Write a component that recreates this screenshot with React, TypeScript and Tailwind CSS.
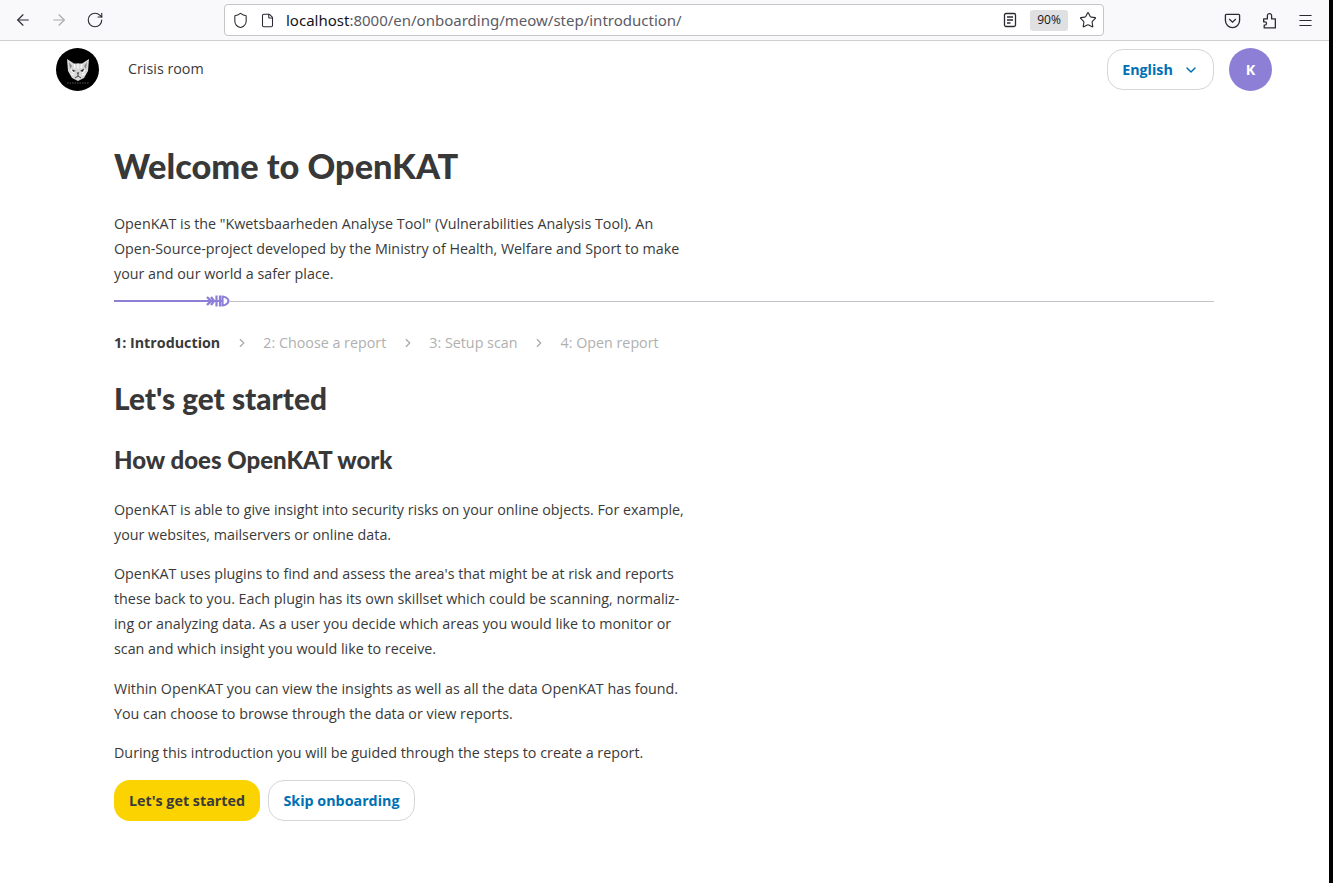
import { ArrowLeft, ArrowRight, ChevronDown, ChevronRight, File, Menu, RotateCw, Shield, Star } from 'lucide-react'

const steps = ['1: Introduction', '2: Choose a report', '3: Setup scan', '4: Open report']

function CatLogo() {
  return (
    <div className="flex h-[43px] w-[43px] items-center justify-center rounded-full bg-black">
      <svg viewBox="0 0 32 32" className="h-[32px] w-[32px]">
        <path d="M5 5l7 4.5h8L27 5l-1 12-4 7-6 3-6-3-4-7z" fill="#d8d8d8" />
        <path d="M7 8l3 4-2 3zM25 8l-3 4 2 3z" fill="#8a8a8a" />
        <path d="M12 10l1 4M16 9.500v5M20 10l-1 4M9 16l3 3M23 16l-3 3M9 20l3 1M23 20l-3 1" stroke="#fff" strokeWidth="1.1" fill="none" />
        <path d="M10 15.500l4 1.500-3 .8zM22 14.500l-4 2.500 3 .8z" fill="#222" />
        <path d="M16 19v3M13 24l3-2 3 2" stroke="#444" strokeWidth="1" fill="none" />
        <path d="M14.500 18.500h3l-1.500 1.500z" fill="#333" />
        <path d="M5 29h22" stroke="#555" strokeWidth="1" strokeDasharray="1.500 1" />
      </svg>
    </div>
  )
}

function FishBone() {
  return (
    <svg viewBox="0 0 24 14" className="h-[14px] w-[24px] shrink-0 text-[#8e7fd6]" fill="none" stroke="currentColor" strokeWidth="2">
      <path d="M0 7h17" />
      <path d="M1 3l4 4-4 4" strokeWidth="2.400" />
      <path d="M5 3l3 4-3 4" strokeWidth="2.400" />
      <path d="M10.500 1.500v11M14 1.500v11" strokeWidth="2.200" />
      <path d="M16.500 2.500c3 0 6 2.500 6 4.500s-3 4.500-6 4.500z" strokeWidth="2.200" />
    </svg>
  )
}

function ReaderIcon() {
  return (
    <svg viewBox="0 0 16 16" className="ml-auto h-[16px] w-[16px]" fill="none" stroke="currentColor" strokeWidth="1.300">
      <rect x="2.500" y="1.500" width="11" height="13" rx="1.500" />
      <path d="M5 5h6M5 8h6M5 11h3.500" />
    </svg>
  )
}

function PocketIcon() {
  return (
    <svg viewBox="0 0 18 18" className="h-[17px] w-[17px]" fill="none" stroke="currentColor" strokeWidth="1.400">
      <path d="M2.500 2.500h13a1 1 0 0 1 1 1V9a7.500 7.500 0 0 1-15 0V3.500a1 1 0 0 1 1-1z" />
      <path d="M5.500 7.500L9 10.800l3.500-3.300" />
    </svg>
  )
}

function ExtensionIcon() {
  return (
    <svg viewBox="0 0 16 16" className="-mr-px h-[17px] w-[17px]" fill="none" stroke="currentColor" strokeWidth="1.200">
      <path d="M3 15h10.500V6.500h-3.500V3.500a2 2 0 0 0-4 0v3H2.500v2.800h1.200a1.500 1.500 0 0 1 0 3H3z" strokeLinejoin="round" />
    </svg>
  )
}

export default function App() {
  return (
    <div className="flex h-[883px] w-[1333px] overflow-hidden bg-black font-['Open_Sans',sans-serif] text-[#3a3a3a]">
      <div className="h-full w-[1329px] bg-white">
        {/* Browser toolbar */}
        <div className="flex h-[41px] items-center border-b border-[#cfcfcf] bg-[#f9f9fb] text-[#2b2a33]">
          <div className="flex items-center gap-[18px] pl-[14px]">
            <ArrowLeft size={18} strokeWidth={1.5} />
            <ArrowRight size={18} strokeWidth={1.5} className="text-[#a9a9ad]" />
            <RotateCw size={18} strokeWidth={1.5} />
          </div>
          <div className="ml-[120px] flex h-[32px] w-[880px] items-center rounded-[4px] border border-[#c6c6c8] bg-white pl-[7px] pr-[6px]">
            <Shield size={17} strokeWidth={1.5} />
            <File size={15} strokeWidth={1.7} className="ml-[11px]" />
            <span className="ml-[11px] font-['Noto_Sans',sans-serif] text-[15px] text-[#5b5b66]">
              <span className="text-[#15141a]">localhost</span>:8000/en/onboarding/meow/step/introduction/
            </span>
            <ReaderIcon />
            <span className="ml-[12px] flex h-[21px] w-[38px] items-center justify-center rounded-[3px] bg-[#e0e0e2] text-[12px] text-[#15141a]">90%</span>
            <Star size={18} strokeWidth={1.5} className="ml-[11px]" />
          </div>
          <div className="ml-auto flex items-center gap-[20px] pr-[15px]">
            <PocketIcon />
            <ExtensionIcon />
            <Menu size={17} strokeWidth={1.5} />
          </div>
        </div>

        {/* Site header */}
        <header className="flex items-center pl-[56px] pr-[57px] pt-[7px]">
          <CatLogo />
          <a className="mb-[2px] ml-[29px] text-[14.3px] text-[#3a3a3a]">Crisis room</a>
          <button className="ml-auto flex h-[41px] w-[107px] items-center justify-center gap-[10px] rounded-[16px] border border-[#d6d6d6] text-[14.3px] font-bold text-[#0070b5]">
            English
            <ChevronDown size={16} strokeWidth={2.2} />
          </button>
          <div className="ml-[15px] flex h-[43px] w-[43px] items-center justify-center rounded-full bg-[#8e7fd6] text-[14.3px] font-bold text-white">K</div>
        </header>

        <main className="pl-[114px]">
          <h1 className="mt-[50px] font-['Lato',sans-serif] text-[34.3px] font-black leading-[50px] text-[#383838]">Welcome to OpenKAT</h1>
          <p className="mt-[20px] w-[576px] text-[14.3px] leading-[25px]">
            OpenKAT is the "Kwetsbaarheden Analyse Tool" (Vulnerabilities Analysis Tool). An Open-Source-project developed by the Ministry of Health, Welfare and Sport to make your and our world a safer place.
          </p>

          {/* Progress line */}
          <div className="mt-[8px] flex w-[1100px] items-center">
            <div className="h-[2px] w-[92px] bg-[#8e7fd6]" />
            <FishBone />
            <div className="h-px flex-1 bg-[#c4c2c8]" />
          </div>

          <ol className="mt-[25px] flex items-center text-[14.3px] leading-[20px]">
            {steps.map((step, i) => (
              <li key={step} className="flex items-center">
                {i > 0 && <ChevronRight size={14} className="mx-[14.5px] text-[#a8a8a8]" />}
                <span className={i === 0 ? 'font-bold text-[#3a3a3a]' : 'text-[#b0b0b0]'}>{step}</span>
              </li>
            ))}
          </ol>

          <h2 className="mt-[26px] font-['Lato',sans-serif] text-[29.8px] font-black leading-[40px] text-[#383838]">Let's get started</h2>
          <h3 className="mt-[23px] font-['Lato',sans-serif] text-[24px] font-black leading-[36px] text-[#383838]">How does OpenKAT work</h3>

          <div className="mt-[19px] w-[576px] space-y-[14.4px] text-[14.3px] leading-[25px]">
            <p>OpenKAT is able to give insight into security risks on your online objects. For example, your websites, mailservers or online data.</p>
            <p>
              OpenKAT uses plugins to find and assess the area's that might be at risk and reports these back to you. Each plugin has its own skillset which could be scanning, normaliz-<br />
              ing or analyzing data. As a user you decide which areas you would like to monitor or scan and which insight you would like to receive.
            </p>
            <p>Within OpenKAT you can view the insights as well as all the data OpenKAT has found. You can choose to browse through the data or view reports.</p>
            <p>During this introduction you will be guided through the steps to create a report.</p>
          </div>

          <div className="mt-[15px] flex gap-[8px]">
            <button className="h-[41px] w-[146px] rounded-[16px] bg-[#fbd300] text-[14.3px] font-bold text-[#3a3a3a]">Let's get started</button>
            <button className="h-[41px] w-[147px] rounded-[16px] border border-[#d6d6d6] text-[14.3px] font-bold text-[#0070b5]">Skip onboarding</button>
          </div>
        </main>
      </div>
    </div>
  )
}
